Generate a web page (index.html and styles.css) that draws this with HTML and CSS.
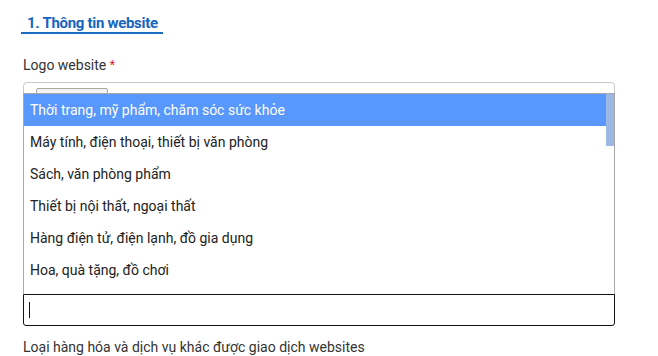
FILE: index.html
```html
<!DOCTYPE html>
<html lang="vi">
<head>
<meta charset="utf-8">
<title>Thông tin website</title>
<link rel="stylesheet" href="styles.css">
</head>
<body>
<div class="page">
  <h2 class="section-title">1. Thông tin website</h2>

  <div class="field">
    <label class="field-label">Logo website <span class="req">*</span></label>
    <div class="upload-box">
      <span class="file-btn"></span>
    </div>
  </div>

  <div class="combo">
    <div class="combo-input"><span class="caret"></span></div>
    <div class="combo-menu">
      <ul class="combo-list">
        <li class="combo-item active">Thời trang, mỹ phẩm, chăm sóc sức khỏe</li>
        <li class="combo-item">Máy tính, điện thoại, thiết bị văn phòng</li>
        <li class="combo-item">Sách, văn phòng phẩm</li>
        <li class="combo-item">Thiết bị nội thất, ngoại thất</li>
        <li class="combo-item">Hàng điện tử, điện lạnh, đồ gia dụng</li>
        <li class="combo-item">Hoa, quà tặng, đồ chơi</li>
      </ul>
      <div class="scroll-thumb"></div>
    </div>
  </div>

  <div class="field">
    <label class="field-label">Loại hàng hóa và dịch vụ khác được giao dịch websites</label>
  </div>
</div>
</body>
</html>
```

FILE: styles.css
```css
* { box-sizing: border-box; }

html, body {
  margin: 0;
  padding: 0;
  background: #fff;
}

body {
  font-family: Roboto, "Liberation Sans", sans-serif;
  font-size: 14px;
  color: #333;
}

.page {
  padding: 0 43px 0 23px;
}

.section-title {
  display: inline-block;
  margin: 14px 0 0 -2px;
  padding: 0 5px 0 6px;
  font-size: 15px;
  line-height: 18px;
  font-weight: 700;
  letter-spacing: -0.3px;
  color: #1565c0;
  border-bottom: 2px solid #1a6cc0;
}

.field-label {
  display: block;
  line-height: 20px;
  color: #333;
}

.field {
  margin-top: 21px;
}

.req {
  color: #e21b1b;
  font-size: 12px;
  vertical-align: 1px;
}

.upload-box {
  margin-top: 7px;
  height: 190px;
  border: 1px solid #c9c9c9;
  border-radius: 4px;
  padding: 5px 12px;
}

.file-btn {
  display: block;
  width: 72px;
  height: 24px;
  border: 1px solid #a8a8a8;
  border-radius: 2px;
  background: #f3f3f3;
}

.combo {
  position: relative;
  margin-top: 22px;
}

.combo-input {
  height: 32px;
  border: 1px solid #111;
  border-radius: 0 0 3px 3px;
  padding-left: 5px;
  display: flex;
  align-items: center;
  background: #fff;
}

.caret {
  display: block;
  width: 1px;
  height: 16px;
  background: #111;
}

.combo-menu {
  position: absolute;
  left: 0;
  right: 0;
  bottom: 100%;
  height: 201px;
  border: 1px solid #a9a9a9;
  border-bottom: none;
  background: #fff;
  overflow: hidden;
}

.combo-list {
  list-style: none;
  margin: 0;
  padding: 0;
}

.combo-item {
  height: 32px;
  line-height: 32px;
  padding-left: 6px;
  color: #222;
  white-space: nowrap;
}

.combo-item.active {
  background: #5897fb;
  color: #fff;
}

.scroll-thumb {
  position: absolute;
  top: 0;
  right: 0;
  width: 8px;
  height: 52px;
  background: #9db8e2;
}

.combo + .field {
  margin-top: 11px;
}
```
